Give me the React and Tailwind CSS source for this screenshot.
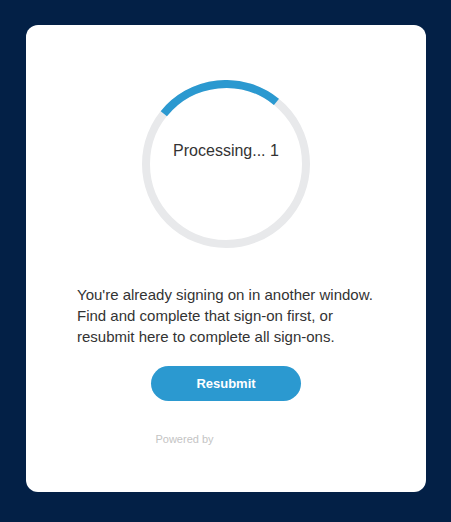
import React from "react";

const Spinner = () => {
  // ring 168px outer, quarter arc on top
  const r = 80;
  const c = 2 * Math.PI * r;
  return (
    <div className="relative w-[168px] h-[168px]">
      <svg width="168" height="168" viewBox="0 0 168 168">
        <circle cx="84" cy="84" r={r} fill="none" stroke="#e8e9eb" strokeWidth="8" />
        <circle
          cx="84"
          cy="84"
          r={r}
          fill="none"
          stroke="#2b99d0"
          strokeWidth="8"
          strokeDasharray={`${c / 4} ${c}`}
          transform="rotate(-141 84 84)"
        />
      </svg>
      <div className="absolute left-0 right-0 top-[61px] text-center text-[16px] leading-5 text-[#333]">
        Processing... 1
      </div>
    </div>
  );
};

export default function App() {
  return (
    <div
      className="min-h-screen bg-[#032046] pt-[25px] flex justify-center"
      style={{ fontFamily: '"Liberation Sans", Arial, sans-serif' }}
    >
      <div className="w-[400px] h-[467px] ml-px bg-white rounded-[12px] flex flex-col items-center pt-[55px]">
        <Spinner />
        <p className="mt-[36px] w-[300px] pl-px text-[15px] leading-[21px] text-[#333]">
          You're already signing on in another window. Find and complete that
          sign-on first, or resubmit here to complete all sign-ons.
        </p>
        <button className="mt-[19px] w-[150px] h-[35px] rounded-full bg-[#2b99d0] text-white text-[13px] font-bold">
          Resubmit
        </button>
        <div className="mt-[31px] flex items-center gap-2 pr-[83px]">
          <span className="text-[11px] leading-[14px] text-[#c4c4c4]">Powered by</span>
        </div>
      </div>
    </div>
  );
}
